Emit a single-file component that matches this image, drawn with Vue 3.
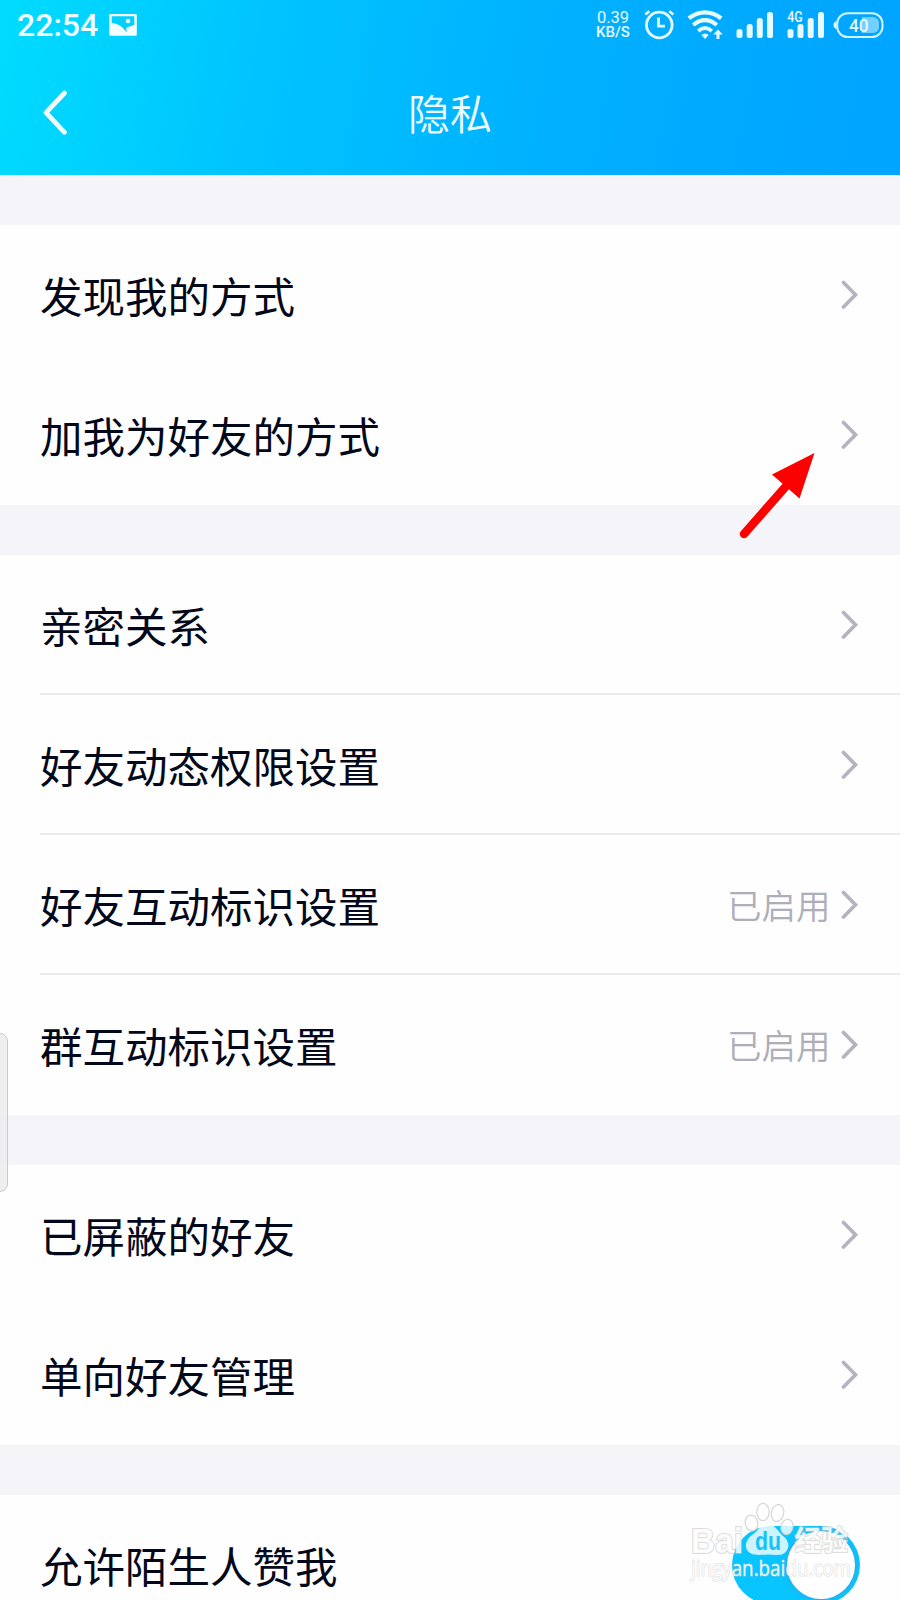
<script setup>
const groups = [
  { lined: false, rows: [{ label: '发现我的方式' }, { label: '加我为好友的方式' }] },
  {
    lined: true,
    rows: [
      { label: '亲密关系' },
      { label: '好友动态权限设置' },
      { label: '好友互动标识设置', value: '已启用' },
      { label: '群互动标识设置', value: '已启用' },
    ],
  },
  { lined: false, rows: [{ label: '已屏蔽的好友' }, { label: '单向好友管理' }] },
  { lined: false, rows: [{ label: '允许陌生人赞我', toggle: true }] },
]
</script>

<template>
  <div class="screen">
    <header class="header">
      <div class="status">
        <span class="time">22:54</span>
        <svg class="photo" width="28" height="22" viewBox="0 0 28 22">
          <path fill="#f2feff" fill-rule="evenodd" d="M1.5 0h25a1.3 1.3 0 0 1 1.3 1.3v19.2a1.3 1.3 0 0 1-1.3 1.3h-25A1.3 1.3 0 0 1 .2 20.500V1.300A1.300 1.300 0 0 1 1.500 0ZM2.700 2.300V9C8 9.500 13 12 16 16.500L18.300 18.400C17 15.500 16.500 13.800 19 13C21.500 12.200 23.500 11 25.300 11.200V2.300Z" />
          <circle cx="19" cy="7" r="2.300" fill="#f2feff" />
        </svg>
        <div class="spacer"></div>
        <div class="speed"><span class="num">0.39</span><span class="unit">KB/S</span></div>
        <svg class="icons" width="250" height="34" viewBox="640 8 250 34">
          <g fill="none" stroke="#e6faff">
            <circle cx="659.300" cy="25" r="12.800" stroke-width="2.800" />
            <path d="M658.500 17.500v8.700h6.500" stroke-width="2.800" />
            <path d="M645.300 14.500l4-3.300M673.300 14.500l-4-3.300" stroke-width="2.500" />
            <path d="M688.800 18.300Q705 6.500 721.200 18.300" stroke-width="4.200" />
            <path d="M693.200 25Q705 15.200 716.800 25" stroke-width="4" />
            <path d="M698.200 31Q705 25 711.800 31" stroke-width="3.800" />
          </g>
          <g fill="#e6faff">
            <path d="M701.300 35Q705 31.800 708.700 35L705 39Z" />
            <path d="M718 29.500l4.800 5h-3.300v4.500h-3v-4.500h-3.300Z" />
            <rect x="736.500" y="29" width="6" height="9" rx="2.600" />
            <rect x="746.700" y="24" width="6" height="14" rx="2.600" />
            <rect x="756.800" y="18" width="6" height="20" rx="2.600" />
            <rect x="767" y="12" width="6" height="26" rx="2.600" />
            <rect x="787.500" y="29" width="6" height="9" rx="2.600" />
            <rect x="797.500" y="24" width="6" height="14" rx="2.600" />
            <rect x="807.700" y="18" width="6" height="20" rx="2.600" />
            <rect x="818" y="12" width="6" height="26" rx="2.600" />
            <path d="M836.500 21q-3 1-3 4t3 4Z" />
            <text x="787.300" y="21.800" class="net" textLength="15.500" lengthAdjust="spacingAndGlyphs">4G</text>
            <path d="M862 17h11a6 6 0 0 1 6 6v4a6 6 0 0 1-6 6H862Z" opacity=".5" />
            <text x="849" y="31.500" class="bat" textLength="19.500" lengthAdjust="spacingAndGlyphs">40</text>
          </g>
          <rect x="837.200" y="13.200" width="45.300" height="23.800" rx="10.500" fill="none" stroke="#d5f4ff" stroke-width="2" />
        </svg>
      </div>
      <div class="nav">
        <svg class="back" width="30" height="50" viewBox="0 0 30 50">
          <path d="M23.500 5L5 24.700L23.500 44.300" fill="none" stroke="#effdff" stroke-width="4.800" stroke-linecap="round" stroke-linejoin="round" />
        </svg>
        <h1>隐私</h1>
      </div>
    </header>

    <section v-for="(g, i) in groups" :key="i" class="group" :class="{ lined: g.lined }">
      <div v-for="r in g.rows" :key="r.label" class="row">
        <span class="label">{{ r.label }}</span>
        <span v-if="r.value" class="value">{{ r.value }}</span>
        <div v-if="r.toggle" class="toggle"><i></i></div>
        <svg v-else class="chev" width="18" height="30" viewBox="0 0 18 30">
          <path d="M2.500 2.500L14.500 14.800L2.500 27" fill="none" stroke="#b4b4c0" stroke-width="3.700" stroke-linecap="round" />
        </svg>
      </div>
    </section>

    <svg class="pointer" width="80" height="90" viewBox="736 450 80 90">
      <path d="M744 534L788 484" stroke="#f00" stroke-width="8.500" stroke-linecap="round" />
      <path d="M814.500 453L772 474.500L799.500 498.500Z" fill="#f00" />
    </svg>
    <div class="edge"></div>

    <svg class="mark" width="190" height="100" viewBox="680 1500 190 100">
      <g fill="#fff" fill-opacity=".8" stroke="#ccc" stroke-opacity=".8" stroke-width="1.200">
        <ellipse cx="751.500" cy="1523" rx="6.200" ry="8" transform="rotate(-12 751.500 1523)" />
        <ellipse cx="763" cy="1512" rx="6.200" ry="8.700" />
        <ellipse cx="777.500" cy="1513" rx="6.200" ry="8.500" transform="rotate(12 777.500 1513)" />
        <ellipse cx="787" cy="1527" rx="6" ry="7.800" transform="rotate(12 787 1527)" />
        <path d="M768 1524.500C776 1524.500 778 1532 783 1536C788 1540 790 1545 787 1550C784 1556 778 1555 768 1554.500C758 1555 751 1556 747 1550C744 1544 747 1539 752 1535C758 1531 760 1524.500 768 1524.500Z" stroke="none" />
      </g>
      <g class="brand">
        <text x="691" y="1553" textLength="52" lengthAdjust="spacingAndGlyphs" class="bai">Bai</text>
        <text x="755" y="1549.500" textLength="26" lengthAdjust="spacingAndGlyphs" class="du">du</text>
        <text x="794.500" y="1551" textLength="53.500" lengthAdjust="spacingAndGlyphs" class="jy">经验</text>
        <text x="691" y="1575.500" textLength="160" lengthAdjust="spacingAndGlyphs" class="url">jingyan.baidu.com</text>
      </g>
    </svg>
  </div>
</template>

<style>
body {
  margin: 0;
  overflow: hidden;
}
</style>

<style scoped>
.screen {
  position: relative;
  width: 900px;
  height: 1600px;
  overflow: hidden;
  background: #f4f4f9;
  font-family: "Noto Sans CJK SC", sans-serif;
  color: #03081a;
}
.header {
  height: 175px;
  background: linear-gradient(100deg, #00dcff 0%, #00c3ff 30%, #00b0ff 62%, #00a5ff 95%);
}
.status {
  display: flex;
  align-items: center;
  height: 50px;
  padding: 0 10px 0 17px;
  color: #effdff;
  font-family: Roboto, sans-serif;
}
.time {
  width: 81px;
  font-size: 32px;
  font-weight: 500;
  line-height: 50px;
  white-space: nowrap;
}
.photo {
  margin-left: 11px;
}
.spacer {
  flex: 1;
}
.speed {
  display: flex;
  flex-direction: column;
  align-items: center;
  width: 36px;
  margin-right: 9px;
  line-height: 15px;
  color: #e6faff;
}
.num {
  font-size: 16.500px;
}
.unit {
  font-size: 15px;
  font-weight: 500;
}
.net {
  font: 500 14px Roboto, sans-serif;
}
.bat {
  font: 500 18px Roboto, sans-serif;
}
.nav {
  display: grid;
  grid-template-columns: 80px 1fr 80px;
  align-items: center;
  height: 125px;
}
.back {
  margin: 0 0 0 41px;
}
h1 {
  margin: -1px 0 0;
  text-align: center;
  font-size: 42px;
  line-height: 60px;
  font-weight: 350;
  color: #effdff;
}
.group {
  margin-top: 50px;
  background: #fefefe;
}
.row {
  display: flex;
  align-items: center;
  height: 140px;
  box-sizing: border-box;
  margin-left: 40px;
  padding-right: 40px;
}
.lined .row:not(:last-child) {
  border-bottom: 2px solid #ececee;
}
.lined .row:not(:last-child) .label,
.lined .row:not(:last-child) .value,
.lined .row:not(:last-child) .chev {
  position: relative;
  top: 1px;
}
.label {
  flex: 1;
  margin-top: -1px;
  font-size: 42.500px;
  line-height: 62px;
}
.chev {
  margin-right: 1px;
}
.value {
  margin: -2px 10.500px 0 0;
  font-size: 34.500px;
  line-height: 50px;
  font-weight: 350;
  color: #aeaeba;
}
.toggle {
  box-sizing: border-box;
  width: 128px;
  height: 78px;
  padding: 5px;
  border-radius: 39px;
  background: #08c4ff;
  display: flex;
  justify-content: flex-end;
}
.toggle i {
  width: 68px;
  height: 68px;
  border-radius: 50%;
  background: #fff;
  box-shadow: 0 0 5px #4a9cda;
}
.pointer {
  position: absolute;
  left: 736px;
  top: 450px;
}
.edge {
  position: absolute;
  left: -12px;
  top: 1033px;
  width: 20px;
  height: 159px;
  box-sizing: border-box;
  border: 1.500px solid #cbc9cd;
  border-radius: 8px;
  background: rgba(238, 236, 239, 0.9);
}
.mark {
  position: absolute;
  left: 680px;
  top: 1500px;
}
.brand text {
  fill: #fff;
  fill-opacity: 0.85;
  stroke: #c8c8c8;
  stroke-opacity: 0.6;
  stroke-width: 2px;
  paint-order: stroke;
}
.brand .bai {
  font: 700 35px "Liberation Sans", sans-serif;
}
.brand .du {
  font: 700 25px "Liberation Sans", sans-serif;
  fill: #18c2f8;
  fill-opacity: 1;
  stroke: none;
}
.brand .jy {
  font: 700 28px "Noto Sans CJK SC", sans-serif;
}
.brand .url {
  font: 400 21px "Open Sans", sans-serif;
  stroke-width: 1.200px;
}
</style>
